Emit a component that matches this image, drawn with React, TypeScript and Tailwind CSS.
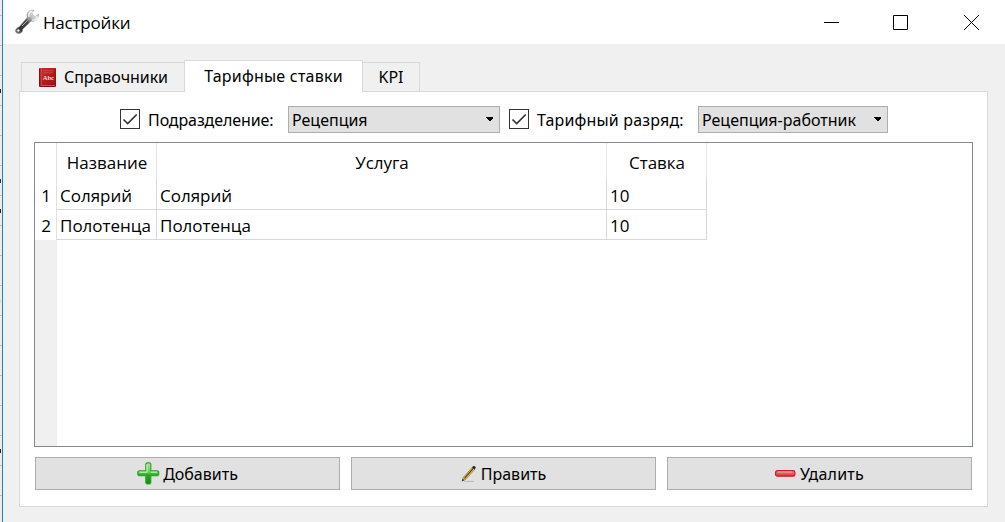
import React, { useState } from "react";

// Two interface fonts: titles and table cells, then tabs, labels and buttons
const CELL = "font-['Open_Sans','Noto_Sans',sans-serif] text-[17px] whitespace-nowrap";
const UI = "font-['Noto_Sans','Open_Sans',sans-serif] text-[16px] whitespace-nowrap";

const ROWS = [
  { name: "Солярий", service: "Солярий", rate: 10 },
  { name: "Полотенца", service: "Полотенца", rate: 10 },
];

// Rows of the window underneath, with the ends of their texts
const BACK_ROWS = [
  "", "", "bg-[#222]", "", "", "bg-[#123a7a]", "bg-[#222]", "", "",
  "bg-[#cfe8d8]", "", "", "", "", "bg-[#222]", "", "",
];

const WrenchIcon = () => (
  <svg width="26" height="26" viewBox="0 0 26 26" className="shrink-0">
    <defs>
      <linearGradient id="steel" x1="0" y1="1" x2="1" y2="0">
        <stop offset="0" stopColor="#999" />
        <stop offset="0.2" stopColor="#333" />
        <stop offset="0.5" stopColor="#484848" />
        <stop offset="0.65" stopColor="#aaa" />
        <stop offset="0.82" stopColor="#eee" />
        <stop offset="1" stopColor="#777" />
      </linearGradient>
    </defs>
    <path
      d="M13.2 8.5C11.8 4 15.5 0.4 20 1.2L18 3.6L18.6 6.4L21.4 7.4L24.4 5C25.2 9.4 21.6 13.2 17 12.2L8.7 20.3C9 23 6.5 25 4 24.5C1 24 0.5 21 2.5 19.5C3.2 18.7 4.3 18.3 5 18Z"
      fill="url(#steel)"
      stroke="#999"
      strokeWidth="0.5"
    />
    <path d="M8 17L15 10" stroke="#aaa" strokeWidth="1" />
    <path d="M15 8C14 5 15.6 3 18 2.4M18 11C21 11.6 23 10 23.7 8" stroke="#f5f5f5" strokeWidth="1.3" fill="none" />
    <circle cx="4.3" cy="21.5" r="1.5" fill="#eee" stroke="#444" strokeWidth="0.6" />
  </svg>
);

const BookIcon = () => (
  <svg width="17" height="19" viewBox="0 0 17 19" className="shrink-0">
    <defs>
      <linearGradient id="cover" x1="0" y1="0" x2="1" y2="1">
        <stop offset="0" stopColor="#c9302f" />
        <stop offset="0.5" stopColor="#b31e20" />
        <stop offset="1" stopColor="#981416" />
      </linearGradient>
    </defs>
    <rect width="17" height="19" rx="1" fill="#7e1213" />
    <rect x="1" width="15.5" height="17" fill="url(#cover)" />
    <path d="M2.5 0V17" stroke="#d45351" strokeWidth="0.6" />
    <path d="M4 2.8H14M4 4.8H14" stroke="#d85b57" strokeWidth="0.6" />
    <path d="M1.5 17.5H16" stroke="#b78480" strokeWidth="0.7" />
    <text x="9.3" y="12.3" textAnchor="middle" fontFamily="Liberation Serif, serif" fontWeight="bold" fontSize="6.5" fill="#f7dada">Abc</text>
  </svg>
);

const PlusIcon = () => (
  <svg width="23" height="23" viewBox="0 0 23 23" className="shrink-0">
    <defs>
      <linearGradient id="green" x1="0" y1="0" x2="0" y2="1">
        <stop offset="0" stopColor="#a8e69c" />
        <stop offset="0.45" stopColor="#6cc95e" />
        <stop offset="0.55" stopColor="#2fae25" />
        <stop offset="1" stopColor="#0b8a05" />
      </linearGradient>
    </defs>
    <path
      d="M9.8 0.9H12.8L13.8 2V8.7H20.5L21.7 9.8V12.7L20.5 13.8H13.8V20.8L12.8 21.9H9.8L8.8 20.8V13.8H2L0.8 12.7V9.8L2 8.7H8.8V2Z"
      fill="url(#green)"
      stroke="#29a321"
      strokeWidth="1.1"
    />
    <path d="M2.5 10.2H10V2.5M14 10.2H20" stroke="#c9f3c1" strokeWidth="1" fill="none" />
  </svg>
);

const PencilIcon = () => (
  <svg width="16" height="18" viewBox="0 0 16 18" className="shrink-0">
    <path d="M3 16.4H13" stroke="#b8b8b8" strokeWidth="1" />
    <path d="M1 16L2.3 12.3L11.3 2.2L13.8 4.3L4.8 14.4Z" fill="#e3bd54" stroke="#8a6c2b" strokeWidth="0.6" />
    <path d="M3.4 13.4L12.5 3.2" stroke="#4f421d" strokeWidth="1.1" />
    <path d="M11 2.4L12.3 1Q13.5 0.6 14.5 1.7Q15 2.6 14.2 3.7L13.7 4.5Z" fill="#252a2e" />
    <path d="M0.8 16.3L1.8 13.8L3.3 15.3Z" fill="#333" />
  </svg>
);

const MinusIcon = () => (
  <svg width="21" height="7" viewBox="0 0 21 7" className="mb-px shrink-0">
    <defs>
      <linearGradient id="red" x1="0" y1="0" x2="0" y2="1">
        <stop offset="0" stopColor="#ed8b8b" />
        <stop offset="1" stopColor="#d93237" />
      </linearGradient>
    </defs>
    <rect x="0.6" y="0.6" width="19.3" height="5.6" rx="1.8" fill="url(#red)" stroke="#c81e25" strokeWidth="1.2" />
    <path d="M3 2H17" stroke="#f4a9a8" strokeWidth="0.8" />
  </svg>
);

const CheckBox = ({ className = "" }: { className?: string }) => {
  const [checked, setChecked] = useState(true);
  return (
    <button
      role="checkbox"
      aria-checked={checked}
      onClick={() => setChecked(!checked)}
      className={`-mt-px h-5 w-5 shrink-0 border border-[#333] bg-white ${className}`}
    >
      {checked && (
        <svg width="18" height="18" viewBox="0 0 18 18" fill="none" stroke="#333" strokeWidth="1.7">
          <path d="M2.5 9.5L6.7 13.5L15.7 4.5" />
        </svg>
      )}
    </button>
  );
};

const Select = ({ value, className = "" }: { value: React.ReactNode; className?: string }) => (
  <button className={`flex h-[27px] shrink-0 items-center justify-between border border-[#adadad] bg-[#e1e1e1] pl-[3px] pr-[5px] ${UI} ${className}`}>
    {value}
    <svg width="8" height="4" viewBox="0 0 8 4" shapeRendering="crispEdges" className="-mt-px">
      <path d="M0 0H7V1H7V2H6V3H5V4H3V3H2V2H1V1H0Z" />
    </svg>
  </button>
);

const ActionButton = ({ icon, children }: { icon: React.ReactNode; children: React.ReactNode }) => (
  <button className={`flex h-[33px] flex-1 items-center justify-center border border-[#adadad] bg-[#e1e1e1] ${UI}`}>
    {icon}
    {children}
  </button>
);

const TitleBar = () => (
  <header className="flex h-11 items-center bg-white pl-[11px] pr-[25px]">
    <WrenchIcon />
    <span className={`ml-[3px] pt-0.5 tracking-[-0.2px] ${CELL}`}>Настройки</span>
    <div className="ml-auto flex items-center gap-[54px]">
      <svg width="15" height="15" stroke="#000" shapeRendering="crispEdges"><path d="M0 7.5H15" /></svg>
      <svg width="15" height="15" fill="none" stroke="#000"><path d="M.5 .5H14.5V14.5H.5Z" /></svg>
      <svg width="17" height="15" fill="none" stroke="#000" className="ml-px"><path d="M1 0L16 15M16 0L1 15" /></svg>
    </div>
  </header>
);

const Tabs = () => (
  <nav className={`relative z-10 -mb-px ml-0.5 flex h-8 items-end ${UI}`}>
    <button className="flex h-[30px] w-[163px] items-center border border-r-0 border-[#d9d9d9] bg-[#f0f0f0] pl-[17px]">
      <BookIcon />
      <span className="ml-2 tracking-[-0.05px]">Справочники</span>
    </button>
    <button className="h-8 w-[179px] border border-b-0 border-[#d9d9d9] bg-white pb-0.5 tracking-[0.23px]">Тарифные ставки</button>
    <button className="h-[30px] w-[57px] border border-l-0 border-[#d9d9d9] bg-[#f0f0f0]">KPI</button>
  </nav>
);

const RatesTable = () => (
  <div className="flex h-[305px] border border-[#828790] bg-white">
    <div className="w-[22px] shrink-0 bg-[#f0f0f0]">
      <div className={`h-[97px] border-r border-[#e0e0e0] bg-white pt-[37px] pl-px text-center ${CELL}`}>
        {ROWS.map((row, i) => (
          <div key={row.name} className="h-[30px] leading-[31px]">{i + 1}</div>
        ))}
      </div>
    </div>
    <div className={CELL}>
      <div className="grid h-[37px] grid-cols-[100px_450px_100px] text-center">
        {["Название", "Услуга", "Ставка"].map((title) => (
          <div key={title} className="h-[37px] border-r border-[#e5e5e5] pl-px leading-[39px]">{title}</div>
        ))}
      </div>
      {ROWS.map((row) => (
        <div key={row.name} className="grid h-[30px] grid-cols-[100px_450px_100px]">
          {[row.name, row.service, row.rate].map((cell, i) => (
            <div key={i} className="h-[30px] border-r border-b border-[#d8d8d8] pl-[3px] leading-[31px]">{cell}</div>
          ))}
        </div>
      ))}
    </div>
  </div>
);

export default function App() {
  return (
    <div className="flex h-[522px] w-[1005px] overflow-hidden bg-[#f0f0f0] text-black">
      {/* Edge of the window underneath */}
      <div className="w-[3px] shrink-0 border-r border-[#1883d7] bg-[#ececec]">
        <div className="h-4 border-b border-[#bbb]" />
        {BACK_ROWS.map((mark, i) => (
          <div key={i} className="flex h-[30px] items-center border-b border-[#bbb]">
            <span className={`h-1 w-px ${mark}`} />
          </div>
        ))}
      </div>
      <div className="flex-1">
        <TitleBar />
        <main className="ml-4 mr-[17px] mt-4">
          <Tabs />
          <section className="h-[416px] border border-[#d9d9d9] bg-white px-[14px] pt-[14px]">
            <div className={`flex items-center pl-[86px] ${UI}`}>
              <CheckBox />
              <span className="ml-2 w-[140px] tracking-[-0.1px]">Подразделение:</span>
              <Select value="Рецепция" className="w-[212px]" />
              <CheckBox className="ml-[9px]" />
              <span className="ml-2 w-[161px] tracking-[0.18px]">Тарифный разряд:</span>
              <Select value="Рецепция-работник" className="w-[190px]" />
            </div>
            <div className="mt-[9px]">
              <RatesTable />
            </div>
            <div className="mt-[10px] flex gap-[11px] px-px">
              <ActionButton icon={<PlusIcon />}><span className="ml-[3px]">Добавить</span></ActionButton>
              <ActionButton icon={<PencilIcon />}><span className="ml-[4px]">Править</span></ActionButton>
              <ActionButton icon={<MinusIcon />}><span className="ml-[4px] tracking-[0.2px]">Удалить</span></ActionButton>
            </div>
          </section>
        </main>
      </div>
    </div>
  );
}
